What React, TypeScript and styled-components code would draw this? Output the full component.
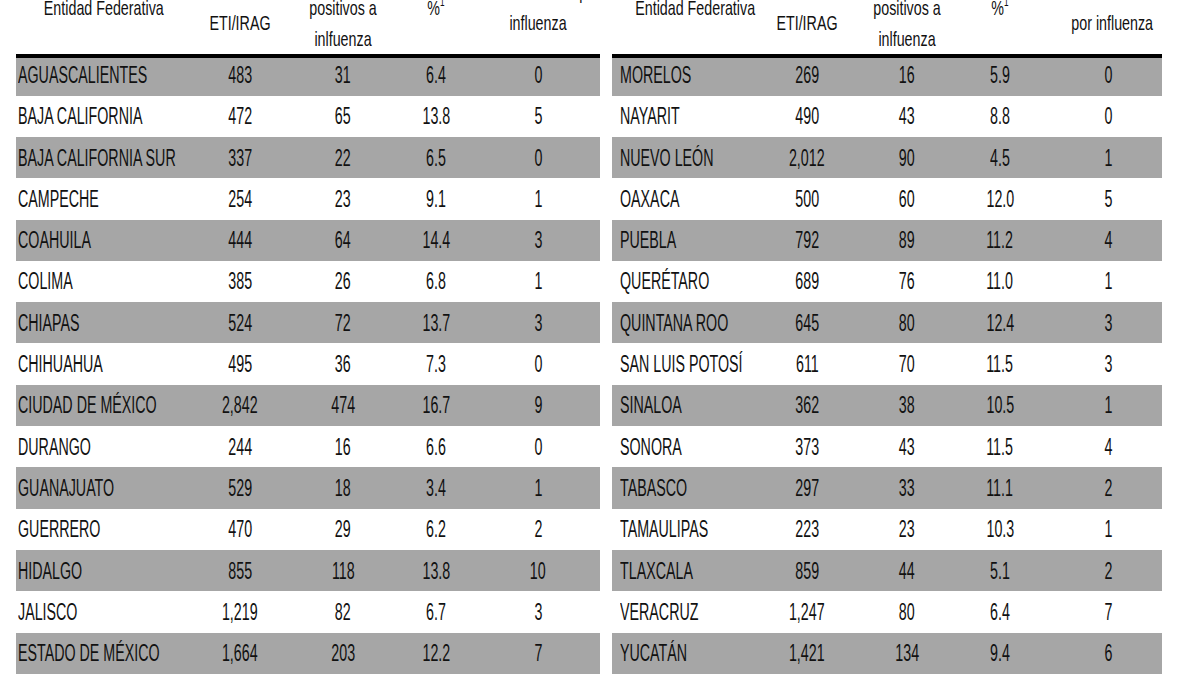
import styled, { createGlobalStyle } from "styled-components";

const GlobalStyle = createGlobalStyle`
  html, body {
    margin: 0;
    padding: 0;
    background: #fff;
    height: 674px;
    overflow: hidden;
  }
  body {
    font-family: "Liberation Sans", Arial, sans-serif;
    color: #111;
  }
`;

const Page = styled.div`
  display: flex;
  gap: 12px;
  width: 1200px;
  height: 674px;
  padding-left: 16px;
  box-sizing: border-box;
  overflow: hidden;
`;

const Table = styled.div<{ $width: number }>`
  flex: none;
  width: ${(p) => p.$width}px;
  display: flex;
  flex-direction: column;
`;

const HeadRow = styled.div<{ $cols: string }>`
  display: grid;
  grid-template-columns: ${(p) => p.$cols};
  height: 95px;
  margin-top: -40px;
  align-items: center;
`;

const HeadCell = styled.div<{ $nudge?: number }>`
  text-align: center;
  font-size: 21px;
  line-height: 31px;
  padding-left: ${(p) => p.$nudge ?? 0}px;
  white-space: nowrap;
`;

const Squeeze = styled.span<{ $origin?: string; $block?: boolean; $scale?: number }>`
  display: ${(p) => (p.$block ? "block" : "inline-block")};
  transform: scaleX(${(p) => p.$scale ?? 0.62});
  transform-origin: ${(p) => p.$origin ?? "center"};
  white-space: nowrap;
`;

const Sup = styled.sup`
  font-size: 12px;
  vertical-align: 9px;
  line-height: 0;
`;

const Row = styled.div<{ $cols: string; $shaded: boolean; $first: boolean }>`
  display: grid;
  grid-template-columns: ${(p) => p.$cols};
  height: 41.65px;
  align-items: center;
  background: ${(p) => (p.$shaded ? "#a6a6a6" : "transparent")};
  box-shadow: ${(p) => (p.$first ? "inset 0 4px 0 #000" : "none")};
  font-size: 23px;
  line-height: 1;
  padding-top: 1px;
  box-sizing: border-box;
`;

const NameCell = styled.div<{ $pad: number }>`
  padding-left: ${(p) => p.$pad}px;
  text-align: left;
`;

const NumCell = styled.div<{ $nudge?: number }>`
  text-align: center;
  padding-left: ${(p) => p.$nudge ?? 0}px;
`;

type Col = { width: number; nudge?: number };

type Side = {
  width: number;
  namePad: number;
  cols: Col[];
  head: { lines: string[]; sup?: boolean }[];
  rows: string[][];
};

const left: Side = {
  width: 584,
  namePad: 2,
  cols: [{ width: 174 }, { width: 100 }, { width: 106 }, { width: 80 }, { width: 124 }],
  head: [
    { lines: ["Entidad Federativa"] },
    { lines: ["Casos de", "ETI/IRAG"] },
    { lines: ["Casos", "positivos a", "inlfuenza"] },
    { lines: ["%"], sup: true },
    { lines: ["Defunciones por", "influenza"] },
  ],
  rows: [
    ["AGUASCALIENTES", "483", "31", "6.4", "0"],
    ["BAJA CALIFORNIA", "472", "65", "13.8", "5"],
    ["BAJA CALIFORNIA SUR", "337", "22", "6.5", "0"],
    ["CAMPECHE", "254", "23", "9.1", "1"],
    ["COAHUILA", "444", "64", "14.4", "3"],
    ["COLIMA", "385", "26", "6.8", "1"],
    ["CHIAPAS", "524", "72", "13.7", "3"],
    ["CHIHUAHUA", "495", "36", "7.3", "0"],
    ["CIUDAD DE MÉXICO", "2,842", "474", "16.7", "9"],
    ["DURANGO", "244", "16", "6.6", "0"],
    ["GUANAJUATO", "529", "18", "3.4", "1"],
    ["GUERRERO", "470", "29", "6.2", "2"],
    ["HIDALGO", "855", "118", "13.8", "10"],
    ["JALISCO", "1,219", "82", "6.7", "3"],
    ["ESTADO DE MÉXICO", "1,664", "203", "12.2", "7"],
  ],
};

const right: Side = {
  width: 550,
  namePad: 8,
  cols: [{ width: 145 }, { width: 100 }, { width: 100 }, { width: 86 }, { width: 119, nudge: 11 }],
  head: [
    { lines: ["Entidad Federativa"] },
    { lines: ["Casos de", "ETI/IRAG"] },
    { lines: ["Casos", "positivos a", "inlfuenza"] },
    { lines: ["%"], sup: true },
    { lines: ["Defunciones", "por influenza"] },
  ],
  rows: [
    ["MORELOS", "269", "16", "5.9", "0"],
    ["NAYARIT", "490", "43", "8.8", "0"],
    ["NUEVO LEÓN", "2,012", "90", "4.5", "1"],
    ["OAXACA", "500", "60", "12.0", "5"],
    ["PUEBLA", "792", "89", "11.2", "4"],
    ["QUERÉTARO", "689", "76", "11.0", "1"],
    ["QUINTANA ROO", "645", "80", "12.4", "3"],
    ["SAN LUIS POTOSÍ", "611", "70", "11.5", "3"],
    ["SINALOA", "362", "38", "10.5", "1"],
    ["SONORA", "373", "43", "11.5", "4"],
    ["TABASCO", "297", "33", "11.1", "2"],
    ["TAMAULIPAS", "223", "23", "10.3", "1"],
    ["TLAXCALA", "859", "44", "5.1", "2"],
    ["VERACRUZ", "1,247", "80", "6.4", "7"],
    ["YUCATÁN", "1,421", "134", "9.4", "6"],
  ],
};

function StateTable({ side }: { side: Side }) {
  const template = side.cols.map((c) => `${c.width}px`).join(" ");
  return (
    <Table $width={side.width}>
      <HeadRow $cols={template}>
        {side.head.map((h, i) => (
          <HeadCell key={i} $nudge={side.cols[i].nudge}>
            {h.lines.map((line, j) => (
              <Squeeze key={j} $block $scale={0.68}>
                {line}
                {h.sup && <Sup>1</Sup>}
              </Squeeze>
            ))}
          </HeadCell>
        ))}
      </HeadRow>
      {side.rows.map((row, r) => (
        <Row key={r} $cols={template} $shaded={r % 2 === 0} $first={r === 0}>
          <NameCell $pad={side.namePad}>
            <Squeeze $origin="left">{row[0]}</Squeeze>
          </NameCell>
          {row.slice(1).map((v, c) => (
            <NumCell key={c} $nudge={side.cols[c + 1].nudge}>
              <Squeeze>{v}</Squeeze>
            </NumCell>
          ))}
        </Row>
      ))}
    </Table>
  );
}

export default function App() {
  return (
    <>
      <GlobalStyle />
      <Page>
        <StateTable side={left} />
        <StateTable side={right} />
      </Page>
    </>
  );
}
